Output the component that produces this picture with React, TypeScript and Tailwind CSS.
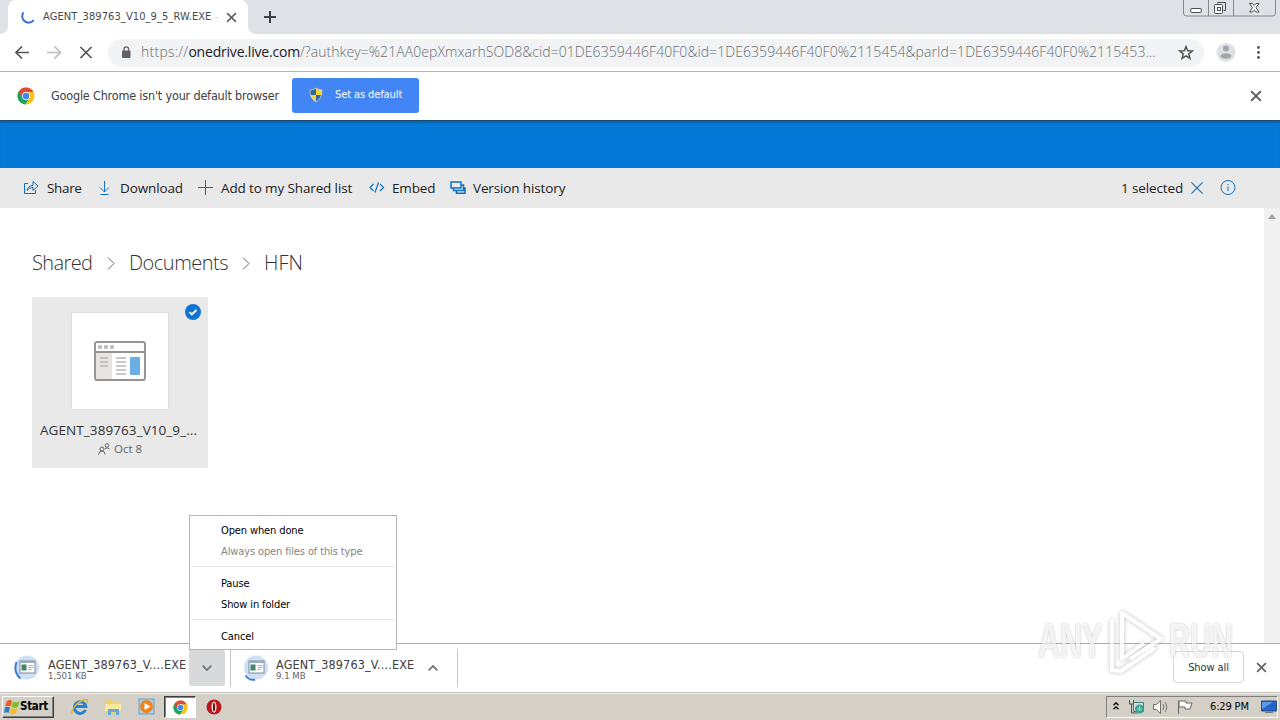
import React from 'react';
import { clsx } from 'clsx';

type IconProps = { className?: string };

const files = [
    { name: 'AGENT_389763_V....EXE', size: '1,501 KB', open: true },
    { name: 'AGENT_389763_V....EXE', size: '9.1 MB', open: false }
];

function ChromeLogo({ className }: IconProps) {
    return (
        <svg viewBox="0 0 18 18" className={className}>
            <circle cx="9" cy="9" r="8.5" fill="#fbc116" />
            <path d="M9 9 1.6 4.8A8.5 8.5 0 0 0 8.2 17.5L12.5 11Z" fill="#1da362" />
            <path d="M1.6 4.8A8.5 8.5 0 0 1 16.5 5H9A4 4 0 0 0 5.2 10.5Z" fill="#dd4b3e" />
            <circle cx="9" cy="9" r="4" fill="#fff" />
            <circle cx="9" cy="9" r="3.3" fill="#4285f4" />
        </svg>
    );
}

function Cross({ className }: IconProps) {
    return (
        <svg viewBox="0 0 10 10" className={className} fill="none" stroke="currentColor">
            <path d="m1 1 8 8M9 1 1 9" />
        </svg>
    );
}

function TabStrip() {
    return (
        <div className="flex h-[34px] shrink-0 justify-between bg-[#dee1e6]">
            <div className="flex">
                <div className="flex w-2 items-end bg-white">
                    <div className="h-full w-2 rounded-br-lg bg-[#dee1e6]" />
                </div>
                <div className="flex w-[240px] items-center rounded-t-lg bg-white pl-3">
                    <svg viewBox="0 0 16 16" className="h-4 w-4" fill="none" stroke="#3b6fd8" strokeWidth="2">
                        <path d="M3.4 3.4A6.3 6.3 0 0 0 13.8 11" />
                    </svg>
                    <span className="ml-[7px] w-[175px] overflow-hidden whitespace-nowrap pt-px text-[11px] tracking-[0.1px] text-[#45494d]">
                        AGENT_389763_V10_9_5_RW.EXE <span className="text-[#c8cacd]">-</span>
                    </span>
                    <Cross className="ml-2 h-[11px] w-[11px] stroke-[1.5] text-[#5f6368]" />
                </div>
                <div className="flex w-2 bg-white">
                    <div className="h-full w-2 rounded-bl-lg bg-[#dee1e6]" />
                </div>
                <svg viewBox="0 0 12 12" className="mt-[11px] ml-2 h-3 w-3" stroke="#3c4043" strokeWidth="2">
                    <path d="M6 0v12M0 6h12" />
                </svg>
            </div>
            <svg viewBox="0 0 94 18" className="mr-[3px] h-[18px] w-[94px]" fill="none" stroke="#85888e">
                <path d="M.5 0v13q0 3 3 3h86q3 0 3-3V0M25.500 0v16M50.500 0v16" />
                <g stroke="#4a4d52">
                    <rect x="7.500" y="8.500" width="11" height="4" rx="1.500" fill="#fff" />
                    <path d="M34.500 3.500v-1h8v8h-2" fill="none" />
                    <rect x="31.500" y="4.500" width="8" height="9" rx="1" fill="#fff" />
                    <rect x="34.500" y="7.500" width="3" height="3" />
                    <path d="M66.500 3.500h3l1.700 2 1.800-2h3l-3 4.200 3 4.300h-3l-1.800-2-1.700 2h-3l3-4.300Z" fill="#fff" />
                </g>
            </svg>
        </div>
    );
}

function AddressBar() {
    return (
        <div className="flex h-[38px] shrink-0 items-center border-b border-[#b1b3b5] bg-white">
            <svg viewBox="0 0 90 20" className="ml-[10px] h-5 w-[90px]" fill="none" strokeWidth="1.700">
                <path d="M19 9.500H6.500M12 3.500l-6 6 6 6" stroke="#505357" />
                <path d="M37 9.500h13M44.500 3.500l6 6-6 6" stroke="#babcbe" />
                <path d="m70.500 4 11 11M81.500 4l-11 11" stroke="#505357" />
            </svg>
            <div className="ml-2 flex h-7 w-[1096px] items-center rounded-full bg-[#f1f3f4]">
                <svg viewBox="0 0 10 14" className="ml-[13px] h-[14px] w-[10px]">
                    <rect x="1" y="4.500" width="8.500" height="7.500" rx="1" fill="#5f6368" />
                    <path d="M3 5V3.200a2.300 2.300 0 0 1 4.600 0V5" fill="none" stroke="#5f6368" strokeWidth="1.300" />
                </svg>
                <span className="ml-[10px] w-[1034px] pb-0.5 whitespace-nowrap font-['Open_Sans',sans-serif] text-[14px] font-light tracking-[0.068px] text-[#686d72]">
                    <span className="tracking-[0.25px]">https://</span>
                    <span className="font-normal tracking-[-0.2px] text-[#202124]">onedrive.live.com</span>
                    /?authkey=%21AA0epXmxarhSOD8&amp;cid=01DE6359446F40F0&amp;id=1DE6359446F40F0%2115454&amp;parId=1DE6359446F40F0%2115453...
                </span>
                <svg viewBox="0 0 16 16" className="ml-[3px] h-4 w-4" fill="none" stroke="#505357" strokeWidth="1.500">
                    <path d="m8 1.500 1.700 4.200 4.500.3-3.400 2.900 1.100 4.400L8 10.900l-3.900 2.400 1.100-4.400L1.800 6l4.500-.3Z" />
                </svg>
            </div>
            <svg viewBox="0 0 20 20" className="ml-3 h-5 w-5">
                <circle cx="10" cy="9.500" r="9.500" fill="#dfe1e3" />
                <circle cx="10" cy="5.500" r="3" fill="#a3a6aa" />
                <ellipse cx="10" cy="13" rx="5.500" ry="2.800" fill="#a3a6aa" />
            </svg>
            <svg viewBox="0 0 4 16" className="ml-5 h-4 w-1" fill="#505357">
                <circle cx="2.500" cy="2.500" r="1.400" />
                <circle cx="2.500" cy="7.500" r="1.400" />
                <circle cx="2.500" cy="12.500" r="1.400" />
            </svg>
        </div>
    );
}

function DefaultBrowserBar() {
    return (
        <div className="flex h-12 shrink-0 items-center bg-white">
            <ChromeLogo className="ml-[17px] h-[18px] w-[18px]" />
            <span className="ml-4 w-[241px] whitespace-nowrap text-[12.5px] tracking-[-0.18px] text-[#3c4043]">Google Chrome isn't your default browser</span>
            <button className="mb-0.5 flex h-[35px] w-[127px] items-center rounded-[3px] bg-[#4285f4]">
                <svg viewBox="0 0 16 16" className="ml-4 h-4 w-4">
                    <path d="M8 1Q5 3 2 3q-.5 8 6 12 6.500-4 6-12-3 0-6-2Z" fill="#f5d33c" />
                    <path d="M8 1v7H2Q1.700 5 2 3 5 3 8 1ZM8 8h5.500Q12.500 12.500 8 15Z" fill="#3169a7" />
                    <path d="M8 1Q5 3 2 3q-.5 8 6 12 6.500-4 6-12-3 0-6-2Z" fill="none" stroke="#d3d3b8" strokeWidth=".8" />
                </svg>
                <span className="ml-[11px] whitespace-nowrap text-[11px] tracking-[-0.1px] text-white">Set as default</span>
            </button>
            <Cross className="mr-[18px] ml-auto h-3 w-3 stroke-[1.6] text-[#5f6368]" />
        </div>
    );
}

function CommandBar() {
    const text = "whitespace-nowrap font-['Open_Sans',sans-serif] text-[13.5px] tracking-[-0.13px] text-[#212121]";
    return (
        <div className="flex h-10 shrink-0 items-center bg-[#e9e9e9] text-[#0f6fbe]">
            <svg viewBox="0 0 16 16" className="ml-[23px] h-4 w-4" fill="none" stroke="currentColor">
                <path d="M5 3.500H1.500v10h11V10M4 10.500q1-5 6-5V1.500L15 6l-5 4.500v-3q-3.500-.3-6 3Z" />
            </svg>
            <span className={clsx(text, 'ml-2 w-[50px] tracking-[-0.35px]')}>Share</span>
            <svg viewBox="0 0 16 16" className="h-4 w-4" fill="none" stroke="currentColor">
                <path d="M7.500 1v10.500M3 7.500l4.500 4.500L12 7.500M3.500 14.500h8" />
            </svg>
            <span className={clsx(text, 'ml-[7px] w-[78px]')}>Download</span>
            <svg viewBox="0 0 16 16" className="h-4 w-4" stroke="currentColor">
                <path d="M7.500 0v15M0 7.500h15" />
            </svg>
            <span className={clsx(text, 'ml-[7px] w-[148px]')}>Add to my Shared list</span>
            <svg viewBox="0 0 16 16" className="h-4 w-4" fill="none" stroke="currentColor" strokeWidth="1.200">
                <path d="M4.500 4 1 7.500 4.500 11M11 4l3.500 3.500L11 11M9.500 2.500l-3.500 10" />
            </svg>
            <span className={clsx(text, 'ml-[7px] w-[58px]')}>Embed</span>
            <svg viewBox="0 0 16 16" className="h-4 w-4" fill="none" stroke="currentColor" strokeWidth="1.500">
                <path d="M1 2h10v6H1ZM3.500 8v2.500h10V5H11M6.500 10.500v2.700h8.500V8h-1.500" />
            </svg>
            <span className={clsx(text, 'ml-[7px]')}>Version history</span>
            <span className={clsx(text, 'ml-auto w-[70px] pl-px')}>1 selected</span>
            <Cross className="h-[14px] w-[14px] stroke-[0.8]" />
            <svg viewBox="0 0 16 16" className="mr-11 ml-4 h-4 w-4" fill="none" stroke="currentColor">
                <circle cx="8" cy="7.500" r="7" />
                <path d="M8 6.500V11M8 4v1.200" />
            </svg>
        </div>
    );
}

function Breadcrumb() {
    return (
        <div className="flex items-center font-['Open_Sans',sans-serif] text-[20px] leading-7 font-light text-[#333]">
            <span className="w-[75px] whitespace-nowrap tracking-[-0.6px]">Shared</span>
            <svg viewBox="0 0 8 14" className="h-[14px] w-2" fill="none" stroke="#666"><path d="m1 1.500 6 6-6 6" /></svg>
            <span className="ml-[14px] w-[113px] whitespace-nowrap tracking-[-0.5px]">Documents</span>
            <svg viewBox="0 0 8 14" className="h-[14px] w-2" fill="none" stroke="#666"><path d="m1 1.500 6 6-6 6" /></svg>
            <span className="ml-[14px]">HFN</span>
        </div>
    );
}

function FileTile() {
    return (
        <div className="relative mt-5 flex h-[171px] w-44 flex-col items-center bg-[#e9e9e9] pt-4 font-['Open_Sans',sans-serif]">
            <div className="flex h-24 w-24 items-center justify-center bg-white shadow-[0_0_2px_#ccc]">
                <svg viewBox="0 0 52 40" className="h-10 w-[52px]">
                    <rect x="1" y="1" width="50" height="38" rx="2" fill="#fff" />
                    <path d="M2 12h16v26H2Z" fill="#e8e4e1" />
                    <path d="M1 11h50" stroke="#979593" strokeWidth="2" />
                    <rect x="1" y="1" width="50" height="38" rx="2" fill="none" stroke="#979593" strokeWidth="2" />
                    <path d="M4 6h4m2 0h4m2 0h4" stroke="#bdbbb9" strokeWidth="3.500" />
                    <path d="M6 17h8M6 21h8M6 25h8" stroke="#b8b6b4" strokeWidth="1.700" />
                    <path d="M22 17h10M22 21h10M22 25h10M22 29h10M22 33h10" stroke="#b8b6b4" strokeWidth="1.700" />
                    <rect x="36" y="16" width="10" height="18" rx="1" fill="#69afe5" />
                </svg>
            </div>
            <svg viewBox="0 0 16 16" className="absolute top-[7px] right-[7px] h-4 w-4">
                <circle cx="8" cy="8" r="8" fill="#0f74cf" />
                <path d="m4.500 8 2.300 2.400L11.500 6" fill="none" stroke="#fff" strokeWidth="1.800" />
            </svg>
            <span className="mt-[11px] w-40 text-[13.5px] leading-5 tracking-[0.08px] whitespace-nowrap text-[#333]">AGENT_389763_V10_9_...</span>
            <span className="flex items-center text-[11.5px] leading-[18px] whitespace-nowrap text-[#666]">
                <svg viewBox="0 0 12 12" className="mr-1 h-3 w-3" fill="none" stroke="#666">
                    <circle cx="4" cy="6" r="2" />
                    <path d="M.5 11.500Q1 8 4 8t3 3.500" />
                    <circle cx="9" cy="2.500" r="1.800" />
                    <path d="M7 6q2-2.500 4.500 0" />
                </svg>
                Oct 8
            </span>
        </div>
    );
}

function DownloadMenu() {
    return (
        <div className="absolute top-[515px] left-[189px] h-[135px] w-[208px] border border-[#b4b4b4] bg-white pt-1 text-[11px] tracking-[-0.12px] text-black">
            <p className="h-[21px] pl-[31px] leading-[21px]">Open when done</p>
            <p className="h-[21px] pl-[31px] leading-[21px] text-[#858585]">Always open files of this type</p>
            <div className="mx-0.5 mt-1 mb-[6px] h-px bg-[#e6e6e6]" />
            <p className="h-[21px] pl-[31px] leading-[21px]">Pause</p>
            <p className="h-[21px] pl-[31px] leading-[21px]">Show in folder</p>
            <div className="mx-0.5 mt-1 mb-[6px] h-px bg-[#e6e6e6]" />
            <p className="h-[21px] pl-[31px] leading-[21px]">Cancel</p>
        </div>
    );
}

function DownloadItem({ file }: { file: (typeof files)[number] }) {
    return (
        <div className={clsx('my-[5px] flex h-[38px] items-center border-r border-[#c6c6c6]', file.open ? 'w-[231px] pl-[14px]' : 'w-[227px] pl-3')}>
            <svg viewBox="0 0 26 26" className="h-[26px] w-[26px] shrink-0">
                <circle cx="13" cy="12.500" r="12" fill="#cfe0f5" />
                <path d={file.open ? 'M2.500 7Q-1 17 6.500 23.500' : 'M2.500 20.500Q6 25.500 12 24.700'} fill="none" stroke="#3b78e0" strokeWidth="2" />
                <rect x="6" y="6" width="15" height="12" fill="#fff" stroke="#7c8a96" />
                <path d="M6.500 7h14" stroke="#9aacbe" strokeWidth="2" />
                <rect x="7.500" y="9.500" width="5" height="6" fill="#43856c" />
                <path d="M14.500 10.500h5M14.500 12.500h5M14.500 14.500h3" stroke="#a6b1b8" />
            </svg>
            <div className={clsx('w-[140px] shrink-0 pt-0.5 whitespace-nowrap', file.open ? 'ml-2' : 'ml-[7px]')}>
                <p className="text-[12.5px] leading-[13px] tracking-[0.16px] text-[#3c4043]">{file.name}</p>
                <p className="text-[9.5px] leading-[9px] text-[#5f6368]">{file.size}</p>
            </div>
            <div className={clsx('flex h-9 w-9 shrink-0 items-center justify-center rounded-[2px]', file.open ? 'ml-px bg-[#d7d9da]' : '-ml-px')}>
                <svg viewBox="0 0 10 6" className="h-[6px] w-[10px]" fill="none" stroke="#6c7074" strokeWidth="1.700">
                    <path d={file.open ? 'm.7.7 4.300 4.300L9.300.7' : 'M.7 5.300 5 1l4.300 4.300'} />
                </svg>
            </div>
        </div>
    );
}

function Watermark() {
    const word = "absolute top-[9px] origin-left text-[49px] leading-[42px] font-bold text-white/80 [text-shadow:0_0_3px_#a8a8a8]";
    return (
        <div className="pointer-events-none absolute top-[610px] left-[1038px] h-[62px] w-[200px] font-['Liberation_Sans_Narrow','Liberation_Sans',sans-serif] opacity-75">
            <span className={clsx(word, 'left-0 scale-x-[0.62]')}>ANY</span>
            <svg viewBox="0 0 58 64" className="absolute top-0 left-[70px] h-16 w-[58px] drop-shadow-[0_0_2px_#aaa]" fill="none" stroke="#fff" strokeWidth="4">
                <path d="M14 32V3L53 29 22 49M14 22v27L36 33M4 10v50l9 1 34-23" strokeLinejoin="round" />
            </svg>
            <span className={clsx(word, 'left-[131px] scale-x-[0.60]')}>RUN</span>
        </div>
    );
}

function DownloadShelf() {
    return (
        <div className="flex h-[49px] shrink-0 items-start border-t border-[#acacac] bg-white">
            {files.map((f) => <DownloadItem key={f.size} file={f} />)}
            <button className="mt-[7px] ml-auto h-8 w-[71px] rounded border border-[#d4d6d9] pt-0.5 text-[11px] tracking-[-0.1px] text-[#303336]">Show all</button>
            <Cross className="mt-[18px] mr-[13px] ml-3 h-[11px] w-[11px] stroke-[1.5] text-[#5f6368]" />
        </div>
    );
}

function Taskbar() {
    return (
        <div className="flex h-7 shrink-0 items-center border-t border-[#c5c1bb] bg-[#d4d0c8] pt-px shadow-[inset_0_1px_0_#f1efeb]">
            <button className="ml-0.5 flex h-[22px] w-[52px] items-center border border-t-white border-r-[#404040] border-b-[#404040] border-l-white text-[11.5px] font-bold text-black shadow-[inset_-1px_-1px_0_#808080]">
                <svg viewBox="0 0 16 16" className="ml-px h-4 w-4 shrink-0">
                    <path d="M3 2q3-2 5 0L6.500 7.500Q4 6 1 7.500Z" fill="#ed5b25" />
                    <path d="M9 2.500q3 1.500 6.500 0L14 8q-3 1.500-6.500 0Z" fill="#7fba34" />
                    <path d="M1 8.500q3-1.500 5 0L4.500 14Q2.500 12.500 0 14Z" fill="#2e7cc4" />
                    <path d="M7 9q3 1.500 6.500 0L12 14.500q-3 1.500-6.500 0Z" fill="#f4bd20" />
                </svg>
                <span className="tracking-[-0.3px]">Start</span>
            </button>
            <svg viewBox="0 0 18 18" className="ml-[17px] h-[18px] w-[18px]" fill="none">
                <path d="M14.500 12a5.800 5.800 0 1 1 .4-3.500H5" stroke="#2384d2" strokeWidth="3" />
                <path d="M2 15Q-1 16 3 9.500T15 1.500q3 0 .5 4" stroke="#e6b634" strokeWidth="1.300" />
            </svg>
            <svg viewBox="0 0 18 18" className="ml-[15px] h-[18px] w-[18px]">
                <path d="M1.500 2h5l1 2h8v12h-14Z" fill="#ecd16c" />
                <path d="M1 6h16v7H1Z" fill="#f9e89e" />
                <path d="M4 17v-6h11v6h-3v-3H7v3Z" fill="#65a9d6" />
            </svg>
            <svg viewBox="0 0 18 18" className="ml-4 h-[18px] w-[18px]">
                <rect x="1" y="1" width="15" height="15" fill="#a9cce8" stroke="#6d9fc8" />
                <circle cx="8.500" cy="8.500" r="6.500" fill="#ed8420" />
                <path d="m6.500 5 6 3.500-6 3.500Z" fill="#fff" />
            </svg>
            <div className="ml-2 flex h-[22px] w-8 items-center justify-center border border-t-[#404040] border-r-white border-b-white border-l-[#404040] bg-white shadow-[inset_1px_1px_0_#808080]">
                <ChromeLogo className="h-[15px] w-[15px]" />
            </div>
            <svg viewBox="0 0 16 16" className="ml-[10px] h-4 w-4">
                <circle cx="8" cy="8" r="7.500" fill="#b9171c" />
                <ellipse cx="8" cy="8" rx="2.500" ry="5.500" fill="#fff" />
                <ellipse cx="8" cy="8" rx="1.200" ry="4.600" fill="#7d0e12" />
            </svg>
            <div className="mr-0.5 ml-auto flex h-[22px] w-[172px] items-center border border-t-[#808080] border-r-white border-b-white border-l-[#808080] text-[11px] text-black">
                <svg viewBox="0 0 8 10" className="ml-[5px] h-[10px] w-2" fill="none" stroke="#000" strokeWidth="1.300">
                    <path d="m1.500 3.300 2.500-2.500 2.500 2.500M1.500 7.300 4 4.800l2.500 2.500" />
                </svg>
                <svg viewBox="0 0 17 16" className="ml-2 h-4 w-[17px]">
                    <path d="M5.500 3.500h10v9h-10Z" fill="#c5e4de" stroke="#4b7a75" />
                    <path d="M1.500 1v4h4V1M3.500 5v9h6" fill="none" stroke="#4d5555" />
                    <circle cx="11.500" cy="10" r="4.500" fill="#39a394" />
                    <path d="M9 10h5M11.500 7v5" stroke="#a6e4d6" />
                </svg>
                <svg viewBox="0 0 17 16" className="ml-[7px] h-4 w-[17px]" fill="none" stroke="#74706b">
                    <path d="M1.500 5.500h3l4-4v13l-4-4h-3Z" fill="#fff" />
                    <path d="M11 5q2 3 0 6M13 3q3.500 5 0 10" />
                </svg>
                <svg viewBox="0 0 17 16" className="ml-2 h-4 w-[17px]" fill="#fff" stroke="#69665f">
                    <path d="M1.500 15V1.500M2 2h7v2h6l-2 6H8V8H2Z" />
                </svg>
                <span className="ml-4 w-[42px] whitespace-nowrap tracking-[-0.15px]">6:29 PM</span>
                <svg viewBox="0 0 16 14" className="ml-[9px] h-[14px] w-4">
                    <path d="M.5 1h15v10H.5Z" fill="#2463c8" stroke="#214780" />
                    <path d="M1 2h11L1 9Z" fill="#5b9ae9" />
                    <path d="M4 12.500h8" stroke="#6b7884" />
                </svg>
            </div>
        </div>
    );
}

export default function App() {
    return (
        <div className="relative flex h-[720px] w-[1280px] flex-col overflow-hidden bg-white font-['DejaVu_Sans_Condensed','DejaVu_Sans',sans-serif]">
            <TabStrip />
            <AddressBar />
            <DefaultBrowserBar />
            <div className="h-12 shrink-0 border-t border-[#174a72] bg-[#0478d7] shadow-[inset_0_2px_1px_#0863b2]" />
            <CommandBar />
            <main className="flex min-h-0 flex-1 justify-between">
                <div className="pt-[41px] pl-8">
                    <Breadcrumb />
                    <FileTile />
                </div>
                <div className="flex w-4 flex-col items-center bg-[#f1f1f1] pt-[6px]">
                    <svg viewBox="0 0 8 5" className="h-[5px] w-2" fill="#a3a3a3"><path d="m4 0 4 5H0Z" /></svg>
                </div>
            </main>
            <DownloadShelf />
            <Taskbar />
            <DownloadMenu />
            <Watermark />
        </div>
    );
}
